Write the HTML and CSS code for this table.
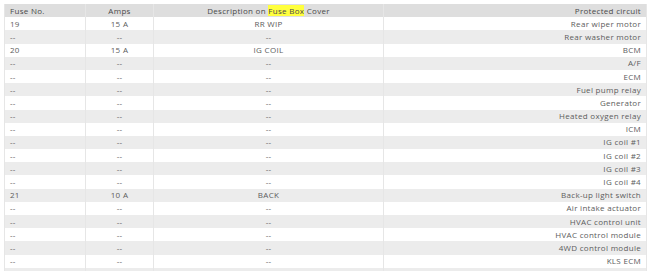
FILE: index.html
```html
<!DOCTYPE html>
<html lang="en">
<head>
  <meta charset="UTF-8">
  <title>Fuse box</title>
  <link rel="stylesheet" href="styles.css">
</head>
<body>
  <table class="fuses">
    <colgroup>
      <col class="c-no"><col class="c-amps"><col class="c-desc"><col class="c-circuit">
    </colgroup>
    <thead>
      <tr><th class="left">Fuse No.</th><th>Amps</th><th>Description on <mark>Fuse Box</mark> Cover</th><th class="right">Protected circuit</th></tr>
    </thead>
    <tbody>
      <tr><td class="left">19</td><td>15 A</td><td>RR WIP</td><td class="right">Rear wiper motor</td></tr>
      <tr><td class="left">--</td><td>--</td><td>--</td><td class="right">Rear washer motor</td></tr>
      <tr><td class="left">20</td><td>15 A</td><td>IG COIL</td><td class="right">BCM</td></tr>
      <tr><td class="left">--</td><td>--</td><td>--</td><td class="right">A/F</td></tr>
      <tr><td class="left">--</td><td>--</td><td>--</td><td class="right">ECM</td></tr>
      <tr><td class="left">--</td><td>--</td><td>--</td><td class="right">Fuel pump relay</td></tr>
      <tr><td class="left">--</td><td>--</td><td>--</td><td class="right">Generator</td></tr>
      <tr><td class="left">--</td><td>--</td><td>--</td><td class="right">Heated oxygen relay</td></tr>
      <tr><td class="left">--</td><td>--</td><td>--</td><td class="right">ICM</td></tr>
      <tr><td class="left">--</td><td>--</td><td>--</td><td class="right">IG coil #1</td></tr>
      <tr><td class="left">--</td><td>--</td><td>--</td><td class="right">IG coil #2</td></tr>
      <tr><td class="left">--</td><td>--</td><td>--</td><td class="right">IG coil #3</td></tr>
      <tr><td class="left">--</td><td>--</td><td>--</td><td class="right">IG coil #4</td></tr>
      <tr><td class="left">21</td><td>10 A</td><td>BACK</td><td class="right">Back-up light switch</td></tr>
      <tr><td class="left">--</td><td>--</td><td>--</td><td class="right">Air intake actuator</td></tr>
      <tr><td class="left">--</td><td>--</td><td>--</td><td class="right">HVAC control unit</td></tr>
      <tr><td class="left">--</td><td>--</td><td>--</td><td class="right">HVAC control module</td></tr>
      <tr><td class="left">--</td><td>--</td><td>--</td><td class="right">4WD control module</td></tr>
      <tr><td class="left">--</td><td>--</td><td>--</td><td class="right">KLS ECM</td></tr>
      <tr><td>&nbsp;</td><td>&nbsp;</td><td>&nbsp;</td><td>&nbsp;</td></tr>
    </tbody>
  </table>
</body>
</html>
```

FILE: styles.css
```css
body{
  margin: 0;
  padding: 4px 4px 0 4px;
  background: #fff;
  font-family: 'Open Sans', sans-serif;
  font-size: 8px;
  letter-spacing: 0.3px;
  color: #5c5c5c;
}

table.fuses{
  width: 642px;
  border-collapse: collapse;
  table-layout: fixed;
}

col.c-no{ width: 81px; }
col.c-amps{ width: 68px; }
col.c-desc{ width: 230px; }
col.c-circuit{ width: 263px; }

table.fuses th,
table.fuses td{
  height: 13.2px;
  padding: 0 5px;
  line-height: 12px;
  text-align: center;
  font-weight: normal;
  border-left: 1px solid #e6e6e6;
  border-right: 1px solid #e6e6e6;
  white-space: nowrap;
}

table.fuses th{
  background: #dedede;
  color: #4a4a4a;
}

table.fuses tbody tr:nth-child(even){
  background: #ececec;
}

table.fuses .left{ text-align: left; }
table.fuses .right{ text-align: right; }

table.fuses mark{
  background: #ffff3d;
  color: #4a4a4a;
}
```
